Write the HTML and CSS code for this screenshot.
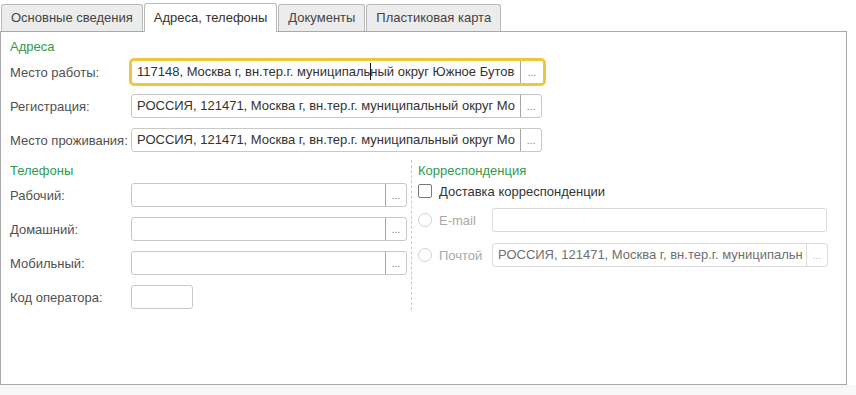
FILE: index.html
```
<!DOCTYPE html>
<html lang="ru">
<head>
    <meta charset="UTF-8">
    <title>Адреса, телефоны</title>
    <link rel="stylesheet" href="styles.css">
</head>
<body>
    <div class="tabs">
        <div class="tab">Основные сведения</div>
        <div class="tab active">Адреса, телефоны</div>
        <div class="tab">Документы</div>
        <div class="tab">Пластиковая карта</div>
    </div>

    <div class="panel">
        <div class="group-title">Адреса</div>
        <div class="addr-rows">
            <div class="row">
                <div class="label">Место работы:</div>
                <div class="field addr focused">
                    <div class="value">117148, Москва г, вн.тер.г. муниципаль<span class="caret"></span>ный округ Южное Бутов</div>
                    <div class="pick">...</div>
                </div>
            </div>
            <div class="row">
                <div class="label">Регистрация:</div>
                <div class="field addr">
                    <div class="value">РОССИЯ, 121471, Москва г, вн.тер.г. муниципальный округ Мо</div>
                    <div class="pick">...</div>
                </div>
            </div>
            <div class="row">
                <div class="label">Место проживания:</div>
                <div class="field addr">
                    <div class="value">РОССИЯ, 121471, Москва г, вн.тер.г. муниципальный округ Мо</div>
                    <div class="pick">...</div>
                </div>
            </div>
        </div>

        <div class="lower">
            <div class="phones">
                <div class="group-title">Телефоны</div>
                <div class="phone-rows">
                    <div class="row">
                        <div class="label">Рабочий:</div>
                        <div class="field phone"><div class="value"></div><div class="pick">...</div></div>
                    </div>
                    <div class="row">
                        <div class="label">Домашний:</div>
                        <div class="field phone"><div class="value"></div><div class="pick">...</div></div>
                    </div>
                    <div class="row">
                        <div class="label">Мобильный:</div>
                        <div class="field phone"><div class="value"></div><div class="pick">...</div></div>
                    </div>
                    <div class="row">
                        <div class="label">Код оператора:</div>
                        <div class="field code"><div class="value"></div></div>
                    </div>
                </div>
            </div>

            <div class="mail">
                <div class="group-title">Корреспонденция</div>
                <div class="check-row">
                    <span class="checkbox"></span>
                    <span class="check-label">Доставка корреспонденции</span>
                </div>
                <div class="row mail-row">
                    <div class="opt"><span class="radio"></span>E-mail</div>
                    <div class="field mailbox disabled"><div class="value"></div></div>
                </div>
                <div class="row mail-row">
                    <div class="opt"><span class="radio"></span>Почтой</div>
                    <div class="field mailbox disabled">
                        <div class="value">РОССИЯ, 121471, Москва г, вн.тер.г. муниципальн</div>
                        <div class="pick">...</div>
                    </div>
                </div>
            </div>
        </div>
    </div>

    <div class="status"></div>
</body>
</html>
```

FILE: styles.css
```
body {
    margin: 0;
    font-family: "Liberation Sans", Arial, sans-serif;
    font-size: 13px;
    color: #505050;
    background-color: #fff;
}

.tabs {
    display: flex;
    align-items: flex-end;
    padding: 3px 0 0 1px;
}

.tab {
    box-sizing: border-box;
    height: 27px;
    line-height: 26px;
    padding: 0 9px;
    margin-right: 1px;
    border: 1px solid #b9b9b9;
    border-bottom: none;
    border-radius: 3px 3px 0 0;
    background-color: #ececec;
    color: #444;
}

    .tab.active {
        position: relative;
        z-index: 1;
        height: 29px;
        line-height: 28px;
        margin-bottom: -1px;
        background-color: #fff;
        color: #333;
    }

.panel {
    box-sizing: border-box;
    width: 847px;
    height: 354px;
    padding: 7px 0 0 9px;
    border: 1px solid #a9a9a9;
    background-color: #fff;
}

.group-title {
    line-height: 16px;
    color: #2f9a4e;
}

.addr-rows {
    display: flex;
    flex-direction: column;
    gap: 10px;
    margin-top: 5px;
}

.row {
    display: flex;
    align-items: center;
    height: 24px;
}

.label {
    flex: none;
    width: 121px;
    white-space: nowrap;
}

.field {
    box-sizing: border-box;
    display: flex;
    height: 24px;
    border: 1px solid #c8c8c8;
    border-radius: 3px;
    background-color: #fff;
}

    .field.addr {
        width: 411px;
    }

    .field.focused {
        width: 413px;
        border-color: #f0c53e;
        box-shadow: 0 0 0 2px #f0c53e;
    }

    .field.phone {
        width: 277px;
    }

    .field.code {
        width: 62px;
    }

    .field.mailbox {
        width: 336px;
    }

    .field.disabled {
        border-color: #dadada;
    }

.value {
    flex: 1;
    min-width: 0;
    padding: 0 5px;
    line-height: 22px;
    white-space: nowrap;
    overflow: hidden;
    color: #333;
}

.caret {
    display: inline-block;
    width: 1px;
    height: 17px;
    margin: 0 -1px 0 0;
    vertical-align: -4px;
    background-color: #111;
}

.pick {
    flex: none;
    width: 20px;
    border-left: 1px solid #a6a6a6;
    text-align: center;
    line-height: 24px;
    font-size: 10px;
    color: #777;
}

.focused .pick {
    width: 22px;
}

.disabled .value {
    color: #707070;
}

.disabled .pick {
    border-left-color: #dadada;
    color: #bbb;
}

.lower {
    display: flex;
    margin-top: 8px;
}

.phones {
    width: 397px;
    margin-right: 4px;
    padding: 3px 0 1px 0;
}

.phone-rows {
    display: flex;
    flex-direction: column;
    gap: 10px;
    margin-top: 4px;
}

.mail {
    width: 409px;
    padding: 3px 0 1px 6px;
    border-left: 1px dashed #c9c9c9;
}

.check-row {
    display: flex;
    align-items: center;
    gap: 7px;
    height: 16px;
    margin-top: 4px;
    color: #333;
}

.checkbox {
    box-sizing: border-box;
    width: 14px;
    height: 14px;
    border: 1px solid #7a7a7a;
    border-radius: 2px;
    background-color: #fff;
}

.mail-row {
    margin-top: 9px;
}

    .mail-row + .mail-row {
        margin-top: 11px;
    }

.opt {
    flex: none;
    display: flex;
    align-items: center;
    gap: 7px;
    width: 74px;
    color: #a8a8a8;
}

.radio {
    box-sizing: border-box;
    width: 14px;
    height: 14px;
    border: 1px solid #d2d2d2;
    border-radius: 50%;
    background-color: #fff;
}

.status {
    height: 10px;
    background-color: #f8f8f8;
}
```
